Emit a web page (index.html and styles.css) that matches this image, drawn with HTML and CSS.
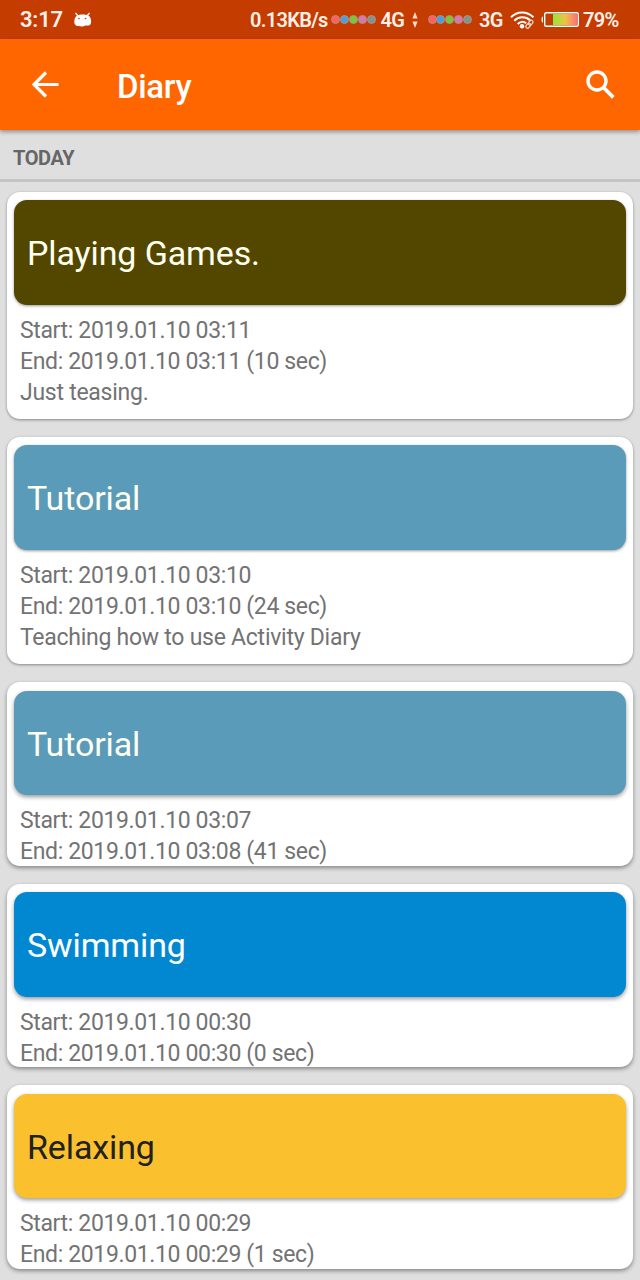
FILE: index.html
```html
<!DOCTYPE html>
<html lang="en">
<head>
    <meta charset="UTF-8">
    <title>Diary</title>
    <link rel="stylesheet" href="styles.css">
</head>
<body>
    <div class="statusbar">
        <span class="clock">3:17</span>
        <svg class="droid" width="20" height="16" viewBox="0 0 20 16">
            <path d="M2.500 1l2.500 3M16.500 1l-2.500 3" stroke="#fff" stroke-width="1.300"/>
            <path d="M1.500 8C2 4 5 2.500 9.500 2.500s8 1 8.500 5.500c.6 4-1 6-4 5.600-1.500-.2-2 .1-3.500.6-2 .5-3 .2-4.500-.2C3 14.500.5 12 1.500 8z" fill="#fff"/>
            <circle cx="6" cy="6.500" r=".8" fill="#c43c00"/>
            <circle cx="12.500" cy="6.500" r=".8" fill="#c43c00"/>
        </svg>
        <span class="speed">0.13KB/s</span>
        <div class="dots">
            <i class="red"></i><i class="blue"></i><i class="green"></i><i class="pink"></i><i class="gray"></i>
        </div>
        <span class="net net4">4G</span>
        <svg class="updown" width="6" height="16" viewBox="0 0 6 16">
            <path d="M3 0l2.600 6.500H.4zM3 16L.4 9.500h5.200z" fill="#fbd9cb"/>
        </svg>
        <div class="dots">
            <i class="red"></i><i class="blue"></i><i class="green"></i><i class="pink"></i><i class="gray"></i>
        </div>
        <span class="net net3">3G</span>
        <svg class="wifi" width="25" height="18" viewBox="0 0 25 18">
            <g fill="none" stroke="#fff" stroke-width="2">
                <path d="M1 6.300C7-.2 17-.2 23.500 6.300"/>
                <path d="M4.300 9.700c4.200-4.500 11.500-4.500 15.700-.5"/>
                <path d="M7.700 13c2.500-2.600 6-2.800 8.500-.7"/>
            </g>
            <circle cx="12" cy="15.300" r="2.200" fill="#fff"/>
            <g fill="none" stroke="#ffd9c9" stroke-width="1.200">
                <rect x="-2.700" y="-1.700" width="5.400" height="3.400" rx="1.700" transform="translate(18.200 14.700) rotate(-50)"/>
                <rect x="-2.700" y="-1.700" width="5.400" height="3.400" rx="1.700" transform="translate(20.700 11.700) rotate(-50)"/>
            </g>
        </svg>
        <svg class="battery" width="38" height="15" viewBox="0 0 38 15">
            <defs>
                <linearGradient id="charge">
                    <stop offset="0" stop-color="#8fe83a"/>
                    <stop offset=".5" stop-color="#eec244"/>
                    <stop offset="1" stop-color="#ff6b80"/>
                </linearGradient>
            </defs>
            <path d="M2 4.500Q.6 4.500.6 6v3q0 1.500 1.400 1.500z" fill="#fff"/>
            <rect x="3.700" y=".7" width="33.600" height="13.600" rx="1.500" fill="none" stroke="#fff" stroke-width="1.400"/>
            <rect x="12" y="2" width="24.500" height="11" fill="url(#charge)"/>
        </svg>
        <span class="percent">79%</span>
    </div>

    <div class="toolbar">
        <svg class="back" width="27" height="27" viewBox="0 0 27 27">
            <path d="M26.500 13.500H3M14 1.500l-12 12 12 12" fill="none" stroke="#fff" stroke-width="3.200"/>
        </svg>
        <h1>Diary</h1>
        <svg class="search" width="30" height="30" viewBox="0 0 30 30">
            <circle cx="11" cy="11" r="9" fill="none" stroke="#fff" stroke-width="3.400"/>
            <path d="M18 18l9.300 9.300" stroke="#fff" stroke-width="3.800"/>
        </svg>
    </div>

    <div class="section">TODAY</div>

    <div class="list">
        <div class="card with-note">
            <div class="activity games">Playing Games.</div>
            <div class="details">
                <p>Start: 2019.01.10 03:11</p>
                <p>End: 2019.01.10 03:11 (10 sec)</p>
                <p class="note">Just teasing.</p>
            </div>
        </div>
        <div class="card with-note">
            <div class="activity tutorial">Tutorial</div>
            <div class="details">
                <p>Start: 2019.01.10 03:10</p>
                <p>End: 2019.01.10 03:10 (24 sec)</p>
                <p class="note">Teaching how to use Activity Diary</p>
            </div>
        </div>
        <div class="card low">
            <div class="activity tutorial">Tutorial</div>
            <div class="details">
                <p>Start: 2019.01.10 03:07</p>
                <p>End: 2019.01.10 03:08 (41 sec)</p>
            </div>
        </div>
        <div class="card low">
            <div class="activity swimming">Swimming</div>
            <div class="details">
                <p>Start: 2019.01.10 00:30</p>
                <p>End: 2019.01.10 00:30 (0 sec)</p>
            </div>
        </div>
        <div class="card low">
            <div class="activity relaxing">Relaxing</div>
            <div class="details">
                <p>Start: 2019.01.10 00:29</p>
                <p>End: 2019.01.10 00:29 (1 sec)</p>
            </div>
        </div>
    </div>
</body>
</html>
```
FILE: styles.css
```css
* {
    margin: 0;
    padding: 0;
    box-sizing: border-box;
}

body {
    height: 1280px;
    overflow: hidden;
    background-color: #dfdfdf;
    font-family: Roboto, "Liberation Sans", sans-serif;
}

svg {
    display: block;
    flex: none;
}

/* status bar */
.statusbar {
    display: flex;
    align-items: center;
    height: 39px;
    padding-left: 20px;
    background-color: #c43c00;
    color: #fff0ea;
    font-size: 20px;
    font-weight: 600;
    line-height: 40px;
    letter-spacing: -0.7px;
    white-space: nowrap;
}

.clock {
    width: 53px;
    font-size: 22px;
    letter-spacing: -0.2px;
}

.speed {
    width: 81px;
    margin-left: 157px;
}

.dots {
    display: flex;
    flex: none;
}

.dots i {
    width: 9px;
    height: 9px;
    margin-right: -0.1px;
    border: 1px solid #b08f80;
    border-radius: 50%;
}

.red { background-color: #ff5f5f; }
.blue { background-color: #479fe0; }
.green { background-color: #79c83c; }
.pink { background-color: #d877b0; }
.gray { background-color: #84948c; }

.net4 {
    width: 31px;
    margin-left: 5px;
}

.updown {
    margin-right: 10px;
}

.net3 {
    width: 32px;
    margin-left: 7px;
}

.wifi {
    margin-left: -1px;
}

.battery {
    margin-left: 6px;
}

.percent {
    margin-left: 4px;
}

/* toolbar */
.toolbar {
    position: relative;
    display: flex;
    align-items: center;
    height: 91px;
    padding: 0 24px 0 32px;
    background-color: #ff6600;
    box-shadow: 0 2px 4px rgba(0,0,0,0.35);
    color: #fff;
}

.toolbar h1 {
    margin: 4px auto 0 58px;
    font-size: 33px;
    font-weight: 500;
    letter-spacing: -0.3px;
}

.section {
    height: 52px;
    padding-left: 13px;
    border-bottom: 3px solid #c4c4c4;
    color: #666;
    font-size: 20px;
    font-weight: 700;
    line-height: 56px;
    letter-spacing: -0.4px;
}

/* diary entries */
.list {
    display: flex;
    flex-direction: column;
    gap: 18px;
    padding: 9.500px 7px 0;
}

.card {
    flex: none;
    height: 183.500px;
    padding: 8.500px 7px 0;
    background-color: #fff;
    border-radius: 13px;
    box-shadow: 0 1px 3px rgba(0,0,0,0.4);
}

.with-note {
    height: 227.400px;
}

.activity {
    height: 104.500px;
    padding-left: 13px;
    border-radius: 13px;
    box-shadow: 0 1px 3px rgba(0,0,0,0.4);
    color: #fff;
    font-size: 34px;
    line-height: 107px;
    letter-spacing: -0.12px;
}

.low,
.low .activity {
    box-shadow: 0 2px 4px rgba(0,0,0,0.4);
}

.games { background-color: #534700; color: #fffff0; }
.tutorial { background-color: #5a9bb9; color: #fffff0; }
.swimming { background-color: #0288d1; }
.relaxing { background-color: #fbc02d; color: #212121; }

.details {
    padding: 10px 6px 0;
    color: #737373;
    font-size: 23px;
    line-height: 31px;
    letter-spacing: -0.36px;
}

.note {
    letter-spacing: -0.26px;
}
```
